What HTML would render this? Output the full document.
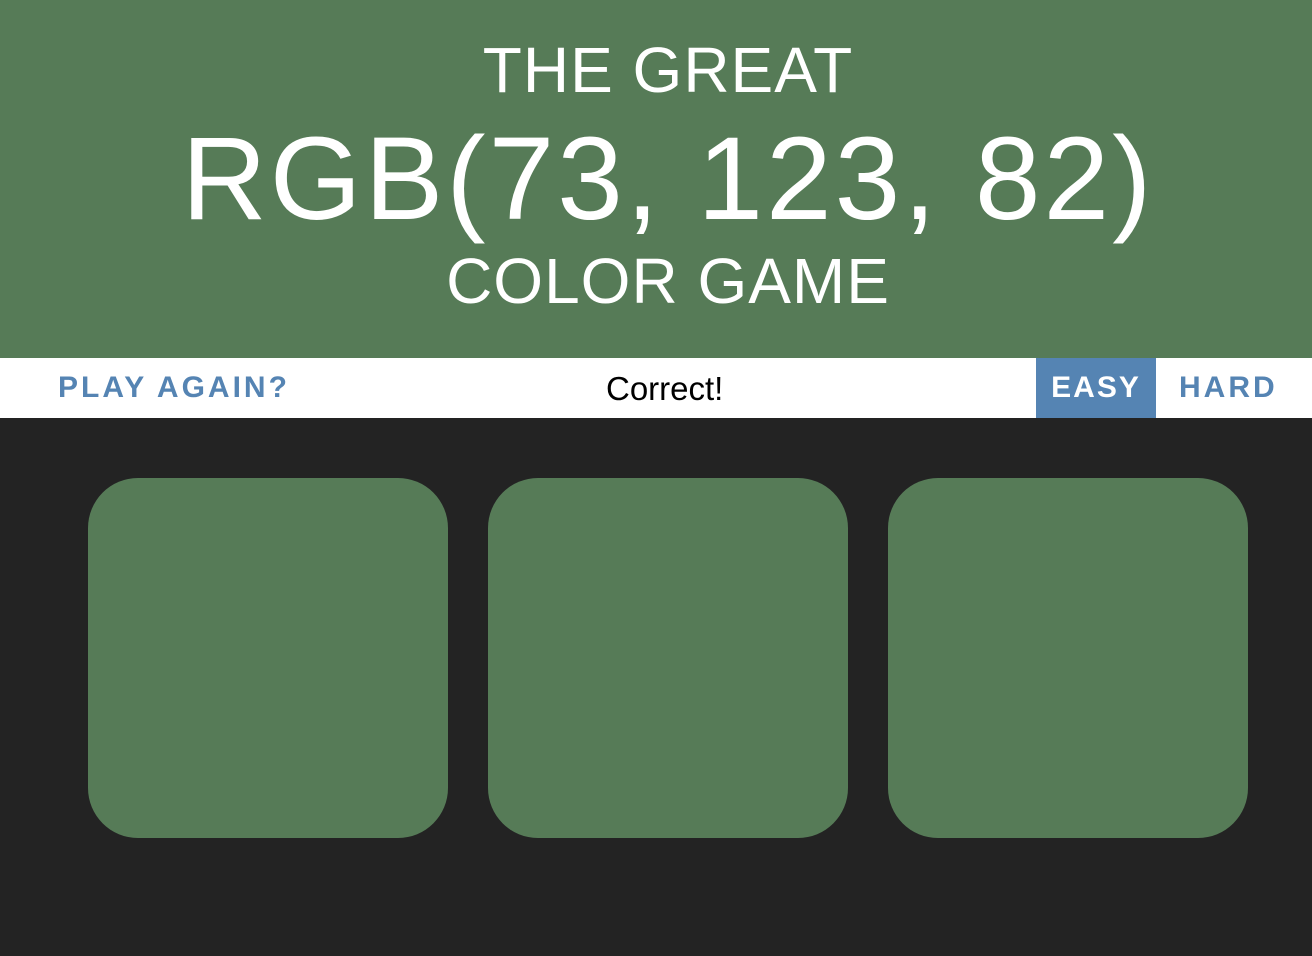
<!DOCTYPE html>
<html><head><style>
body{margin:0;width:1312px;height:956px;background:#232323;font-family:"Liberation Sans",sans-serif;overflow:hidden}
h1{margin:0;background:#567b57;height:358px;color:#fff;text-align:center;font-weight:normal;position:relative}
.l{position:absolute;left:24px;right:0;white-space:nowrap}
#a{top:33px;font-size:64px;letter-spacing:1px}
#b{top:111px;font-size:118px;letter-spacing:3px}
#c{top:244px;font-size:64px;letter-spacing:1px}
.bar{position:absolute;top:358px;left:0;width:1312px;height:60px;background:#fff}
.bar span{position:absolute;top:0;line-height:60px;font-size:30px}
.btn{color:#5584b3;font-weight:bold;letter-spacing:3px}
.s{position:absolute;top:478px;width:360px;height:360px;border-radius:50px;background:#567b57}
</style></head><body>
<h1><div class="l" id="a">THE GREAT</div><div class="l" id="b">RGB(73, 123, 82)</div><div class="l" id="c">COLOR GAME</div></h1>
<div class="bar">
<span class="btn" style="left:58px">PLAY AGAIN?</span>
<span style="left:606px;font-size:33px;line-height:62px">Correct!</span>
<span class="btn" style="left:1036px;width:120px;height:60px;background:#5584b3;color:#fff;text-align:center;letter-spacing:2px">EASY</span>
<span class="btn" style="left:1179px">HARD</span>
</div>
<div class="s" style="left:88px"></div>
<div class="s" style="left:488px"></div>
<div class="s" style="left:888px"></div>
</body></html>
